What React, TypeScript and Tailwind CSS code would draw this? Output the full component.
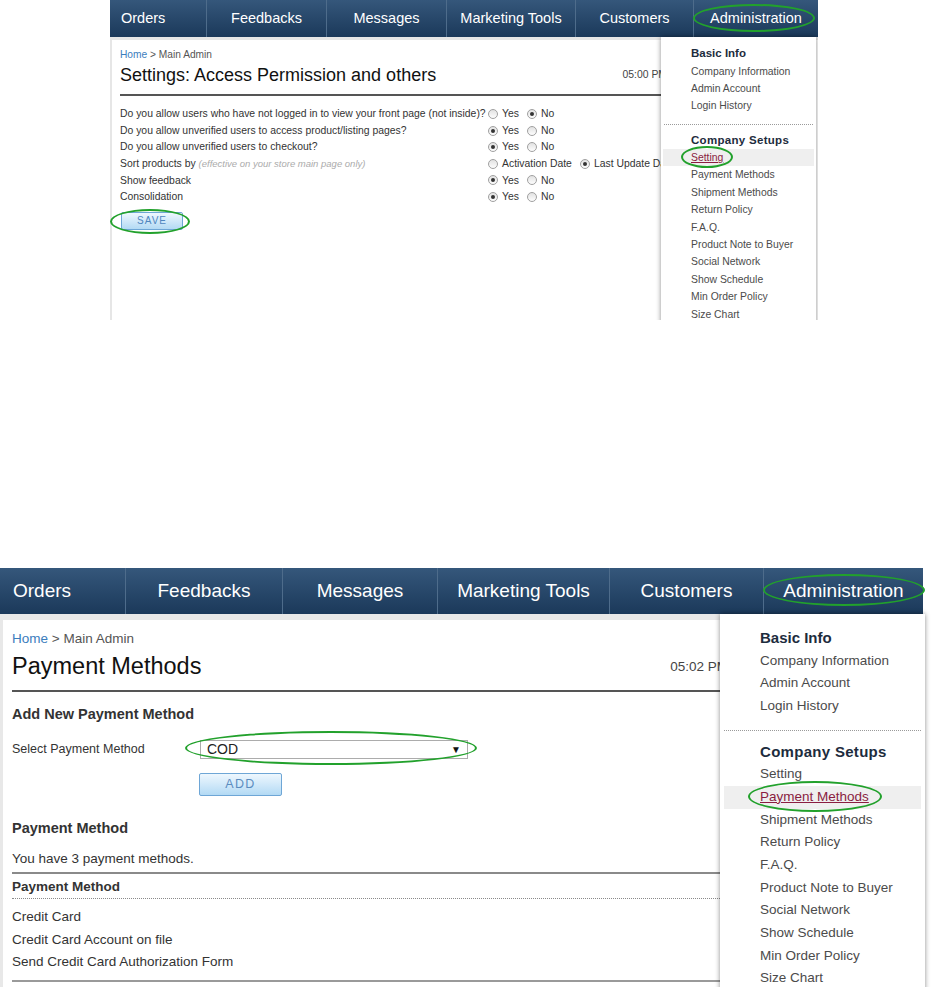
import React from "react";

type Cell = { label: string; cls: string };

const TOP_NAV: Cell[] = [
  { label: "Orders", cls: "w-[96px] pl-[11px]" },
  { label: "Feedbacks", cls: "w-[120px] justify-center" },
  { label: "Messages", cls: "w-[120px] justify-center" },
  { label: "Marketing Tools", cls: "w-[129px] justify-center" },
  { label: "Customers", cls: "w-[118px] justify-center" },
  { label: "Administration", cls: "w-[125px] justify-center" },
];

const BIG_NAV: Cell[] = [
  { label: "Orders", cls: "w-[125px] pl-[13px]" },
  { label: "Feedbacks", cls: "w-[157px] justify-center" },
  { label: "Messages", cls: "w-[155px] justify-center" },
  { label: "Marketing Tools", cls: "w-[172px] justify-center" },
  { label: "Customers", cls: "w-[154px] justify-center" },
  { label: "Administration", cls: "w-[160px] justify-center" },
];

const BASIC = ["Company Information", "Admin Account", "Login History"];
const SETUPS = [
  "Setting",
  "Payment Methods",
  "Shipment Methods",
  "Return Policy",
  "F.A.Q.",
  "Product Note to Buyer",
  "Social Network",
  "Show Schedule",
  "Min Order Policy",
  "Size Chart",
];

function NavBar({ cells, bar, text }: { cells: Cell[]; bar: string; text: string }) {
  return (
    <div className={`flex ${bar} bg-linear-to-b from-[#35577b] to-[#1b395a]`}>
      {cells.map((c, i) => (
        <div
          key={c.label}
          className={`flex h-full items-center text-white ${text} ${c.cls} ${i ? "border-l border-[#4e6c8b]" : ""}`}
        >
          {c.label}
        </div>
      ))}
    </div>
  );
}

// green hand-drawn ring used as an annotation on the screenshots
function Ring({ cls }: { cls: string }) {
  return <div className={`pointer-events-none absolute rounded-[50%] border-2 border-[#22a12c] ${cls}`} />;
}

function AdminMenu({ big, active }: { big?: boolean; active: string }) {
  const head = big
    ? "h-[22.7px] leading-[22.7px] pl-[40px] text-[15px]"
    : "h-[17.4px] leading-[17.4px] pl-[30px] text-[11.5px]";
  const row = big
    ? "h-[22.7px] leading-[22.7px] mx-[4px] pl-[36px] text-[13.5px]"
    : "h-[17.4px] leading-[17.4px] mx-[2px] pl-[28px] text-[10.4px]";

  return (
    <div
      className={`absolute bg-white shadow-[0_0_5px_rgba(0,0,0,0.45)] ${
        big ? "left-[720px] top-[46px] h-[380px] w-[205px] pt-[13px]" : "left-[551px] top-[37px] h-[290px] w-[155px] pt-[8.3px]"
      }`}
    >
      <div className={`font-bold text-[#1d2c3d] ${head}`}>Basic Info</div>
      {BASIC.map((t) => (
        <div key={t} className={`text-[#4b4b4b] ${row}`}>
          {t}
        </div>
      ))}
      <div
        className={`border-t border-dotted border-[#9a9a9a] ${
          big ? "mx-[4px] mt-[11.8px] mb-[10px]" : "mx-[3px] mt-[9.4px] mb-[6.4px]"
        }`}
      />
      <div className={`font-bold tracking-[0.3px] text-[#1d2c3d] ${head}`}>Company Setups</div>
      {SETUPS.map((t) => (
        <div
          key={t}
          className={`${row} ${t === active ? "bg-[#efefef] text-[#8a1d41] underline" : "text-[#4b4b4b]"}`}
        >
          {t}
        </div>
      ))}
    </div>
  );
}

function Radio({ on }: { on?: boolean }) {
  return (
    <span className="inline-flex h-[10px] w-[10px] shrink-0 items-center justify-center rounded-full border border-[#a0a0a0] bg-linear-to-b from-[#e2e2e2] to-[#fdfdfd]">
      {on && <span className="h-[4px] w-[4px] rounded-full bg-[#333]" />}
    </span>
  );
}

const SETTINGS: { q: React.ReactNode; opts: [string, boolean][] }[] = [
  { q: "Do you allow users who have not logged in to view your front page (not inside)?", opts: [["Yes", false], ["No", true]] },
  { q: "Do you allow unverified users to access product/listing pages?", opts: [["Yes", true], ["No", false]] },
  { q: "Do you allow unverified users to checkout?", opts: [["Yes", true], ["No", false]] },
  {
    q: (
      <>
        Sort products by <span className="text-[9.5px] italic text-[#ababab]">(effective on your store main page only)</span>
      </>
    ),
    opts: [["Activation Date", false], ["Last Update Date", true]],
  },
  { q: "Show feedback", opts: [["Yes", true], ["No", false]] },
  { q: "Consolidation", opts: [["Yes", true], ["No", false]] },
];

function SettingsShot() {
  return (
    <div className="relative ml-[110px] h-[320px] w-[708px] overflow-hidden">
      <NavBar cells={TOP_NAV} bar="h-[37px]" text="text-[14.5px]" />
      <div className="h-[283px] border-t-[3px] border-l-2 border-[#e6e6e6] pt-[8px] pl-[8px]">
        <div className="w-[547px]">
          <div className="h-[14px] text-[10.2px] leading-[14px] text-[#555]">
            <span className="text-[#3b7dbd]">Home</span> &gt; Main Admin
          </div>
          <div className="mt-[2px] flex h-[22px] items-center justify-between">
            <span className="text-[18px] text-[#111]">Settings: Access Permission and others</span>
            <span className="text-[10.4px] text-[#444]">05:00 PM</span>
          </div>
          <div className="mt-[8px] h-[2px] bg-[#555]" />
        </div>
        <div className="mt-[9.7px] text-[10.4px] text-[#333]">
          {SETTINGS.map((s, i) => (
            <div key={i} className="flex h-[16.6px] items-center">
              <div className="w-[368px] shrink-0 whitespace-nowrap">{s.q}</div>
              <div className="flex items-center whitespace-nowrap">
                {s.opts.map(([label, on], j) => (
                  <span key={label} className={`flex items-center gap-[4px] ${j ? "ml-[8px]" : ""}`}>
                    <Radio on={on} />
                    {label}
                  </span>
                ))}
              </div>
            </div>
          ))}
        </div>
        <button className="mt-[6.7px] ml-px flex h-[18px] w-[62px] items-center justify-center rounded-[2px] border border-[#6ea6d6] bg-linear-to-b from-[#eef7fe] to-[#b3daf4] text-[10px] tracking-[1px] text-[#4f86bf]">
          SAVE
        </button>
      </div>
      <AdminMenu active="Setting" />
      <Ring cls="left-[583px] top-[4px] h-[28px] w-[122px]" />
      <Ring cls="left-[571px] top-[146px] h-[22px] w-[52px]" />
      <Ring cls="left-0 top-[209px] h-[25px] w-[80px]" />
    </div>
  );
}

function PaymentShot() {
  return (
    <div className="relative mt-[248px] h-[419px] w-[936px] overflow-hidden">
      <div className="w-[923px]">
        <NavBar cells={BIG_NAV} bar="h-[46px]" text="text-[19px]" />
      </div>
      <div className="h-[373px] w-[923px] border-t-[6px] border-l-[3px] border-[#e8e8e8] pt-[10px] pl-[9px]">
        <div className="w-[716px] text-[#333]">
          <div className="h-[18px] text-[13.5px] leading-[18px] text-[#555]">
            <span className="text-[#3b7dbd]">Home</span> &gt; Main Admin
          </div>
          <div className="mt-[5px] flex h-[28px] items-center justify-between">
            <span className="text-[23.5px] text-[#111]">Payment Methods</span>
            <span className="text-[13.5px] text-[#444]">05:02 PM</span>
          </div>
          <div className="mt-[9px] h-[2px] bg-[#555]" />

          <div className="mt-[13px] h-[18px] text-[14.5px] leading-[18px] font-bold">Add New Payment Method</div>
          <div className="mt-[16px] flex h-[20px] items-center">
            <span className="w-[188px] shrink-0 text-[12.5px]">Select Payment Method</span>
            <div className="flex h-[19px] w-[268px] items-center justify-between border border-[#acacac] bg-white pr-[6px] pl-[6px]">
              <span className="text-[14px] text-[#222]">COD</span>
              <span className="text-[10px] text-[#111]">▼</span>
            </div>
          </div>
          <button className="mt-[14px] ml-[187px] flex h-[23px] w-[83px] items-center justify-center rounded-[2px] border border-[#6ea6d6] bg-linear-to-b from-[#eef7fe] to-[#b3daf4] text-[12.5px] tracking-[1.3px] text-[#5b8cbf]">
            ADD
          </button>

          <div className="mt-[23px] h-[18px] text-[14.5px] leading-[18px] font-bold">Payment Method</div>
          <div className="mt-[13px] h-[18px] text-[13.5px] leading-[18px]">You have 3 payment methods.</div>
          <div className="mt-[4px] h-[2px] bg-[#8a8a8a]" />
          <div className="mt-[4px] h-[18px] text-[13.5px] leading-[18px] font-bold">Payment Method</div>
          <div className="mt-[2px] border-t border-dotted border-[#8a8a8a]" />
          <div className="mt-[7px] text-[13.5px]">
            {["Credit Card", "Credit Card Account on file", "Send Credit Card Authorization Form"].map((t) => (
              <div key={t} className="h-[22.5px] leading-[22.5px]">
                {t}
              </div>
            ))}
          </div>
          <div className="mt-[6px] h-[2px] bg-[#9a9a9a]" />
        </div>
      </div>
      <AdminMenu big active="Payment Methods" />
      <Ring cls="left-[763px] top-[6px] h-[32px] w-[162px]" />
      <Ring cls="left-[185px] top-[163px] h-[34px] w-[292px]" />
      <Ring cls="left-[748px] top-[213px] h-[31px] w-[134px]" />
    </div>
  );
}

export default function App() {
  return (
    <div className="h-[987px] w-[936px] overflow-hidden bg-white font-['Liberation_Sans',Arial,sans-serif]">
      <SettingsShot />
      <PaymentShot />
    </div>
  );
}
